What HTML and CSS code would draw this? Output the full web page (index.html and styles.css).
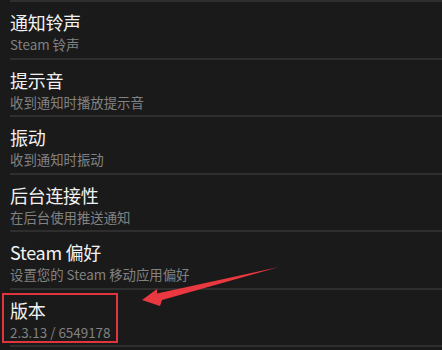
FILE: index.html
```html
<!DOCTYPE html>
<html lang="zh-CN">
<head>
<meta charset="utf-8">
<link rel="stylesheet" href="styles.css">
</head>
<body>
<div class="screen">
  <ul class="prefs">
    <li class="pref"><div class="title">通知铃声</div><div class="summary">Steam 铃声</div></li>
    <li class="pref"><div class="title">提示音</div><div class="summary">收到通知时播放提示音</div></li>
    <li class="pref"><div class="title">振动</div><div class="summary">收到通知时振动</div></li>
    <li class="pref"><div class="title">后台连接性</div><div class="summary">在后台使用推送通知</div></li>
    <li class="pref"><div class="title">Steam 偏好</div><div class="summary">设置您的 Steam 移动应用偏好</div></li>
    <li class="pref last"><div class="title">版本</div><div class="summary">2.3.13 / 6549178</div></li>
  </ul>
  <div class="highlight"></div>
  <svg class="arrow" width="442" height="350" viewBox="0 0 442 350">
    <polygon points="142,300 157,289 157,293.5 279,267 162,300 160,306" fill="#e9383f"/>
  </svg>
</div>
</body>
</html>
```
FILE: styles.css
```css
html, body {
  margin: 0;
  padding: 0;
  background: #1a1a1a;
}
.screen {
  position: relative;
  width: 442px;
  height: 350px;
  overflow: hidden;
  font-family: "Noto Sans CJK SC", "Noto Sans", Roboto, sans-serif;
}
.prefs {
  list-style: none;
  margin: 0;
  padding: 0;
}
.pref {
  margin-left: 10px;
  height: 57.5px;
  box-sizing: border-box;
  border-top: 2px solid #2e2e2e;
  padding-top: 9px;
}
.pref.last {
  border-bottom: 2px solid #2e2e2e;
  height: 59.5px;
}
.title {
  color: #f2f2f2;
  font-size: 18px;
  line-height: 22px;
  letter-spacing: -0.3px;
}
.summary {
  margin-top: 3px;
  color: #828282;
  font-size: 13.4px;
  line-height: 17px;
}
.highlight {
  position: absolute;
  left: 2px;
  top: 293px;
  width: 116px;
  height: 50px;
  box-sizing: border-box;
  border: 2px solid #e0353d;
}
.arrow {
  position: absolute;
  left: 0;
  top: 0;
}
```
